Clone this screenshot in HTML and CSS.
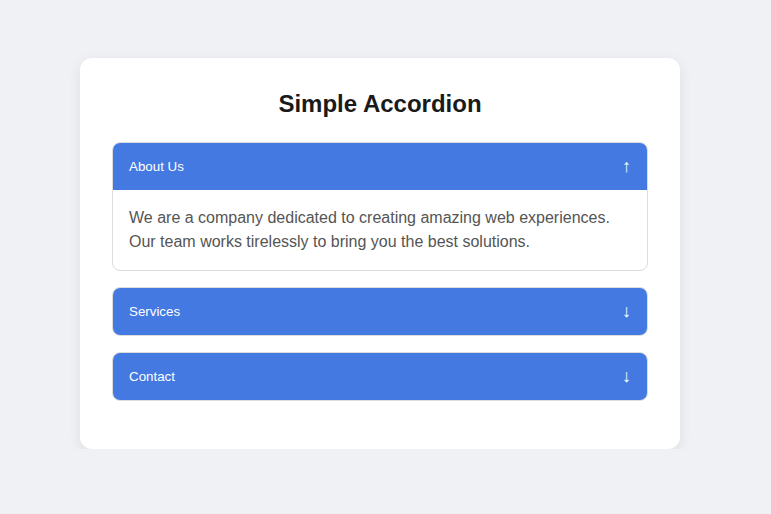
FILE: index.html
```html
<!DOCTYPE html>
<html lang="en">
<head>
<meta charset="utf-8">
<title>Simple Accordion</title>
<link rel="stylesheet" href="styles.css">
</head>
<body>
<main class="card">
  <h2 class="title">Simple Accordion</h2>
  <div class="item open">
    <button class="header"><span>About Us</span><span class="arrow">↑</span></button>
    <div class="content">We are a company dedicated to creating amazing web experiences. Our team works tirelessly to bring you the best solutions.</div>
  </div>
  <div class="item">
    <button class="header"><span>Services</span><span class="arrow">↓</span></button>
  </div>
  <div class="item">
    <button class="header"><span>Contact</span><span class="arrow">↓</span></button>
  </div>
</main>
</body>
</html>
```
FILE: styles.css
```css
html, body {
  margin: 0;
  padding: 0;
}
body {
  background: #f0f1f5;
  font-family: "Liberation Sans", Arial, sans-serif;
  width: 760px;
  display: flex;
  justify-content: center;
  padding-top: 58px;
}
.card {
  width: 600px;
  box-sizing: border-box;
  background: #fff;
  border-radius: 12px;
  padding: 32px 32px 32px;
  box-shadow: 0 4px 14px rgba(0, 0, 0, 0.08);
}
.title {
  margin: 0 0 24px;
  text-align: center;
  font-size: 24px;
  line-height: 28px;
  font-weight: bold;
  color: #1a1a1a;
}
.item {
  border: 1px solid #dddddd;
  border-radius: 8px;
  overflow: hidden;
  margin-bottom: 16px;
}
.header {
  display: flex;
  justify-content: space-between;
  align-items: center;
  width: 100%;
  border: none;
  margin: 0;
  background: #4479e1;
  color: #fff;
  font-family: "Liberation Sans", Arial, sans-serif;
  font-size: 13.333px;
  line-height: 15px;
  padding: 16px 16px;
  text-align: left;
  cursor: pointer;
}
.arrow {
  font-size: 18px;
  line-height: 15px;
}
.content {
  padding: 16px;
  font-size: 16px;
  line-height: 24px;
  color: #555;
}
```
